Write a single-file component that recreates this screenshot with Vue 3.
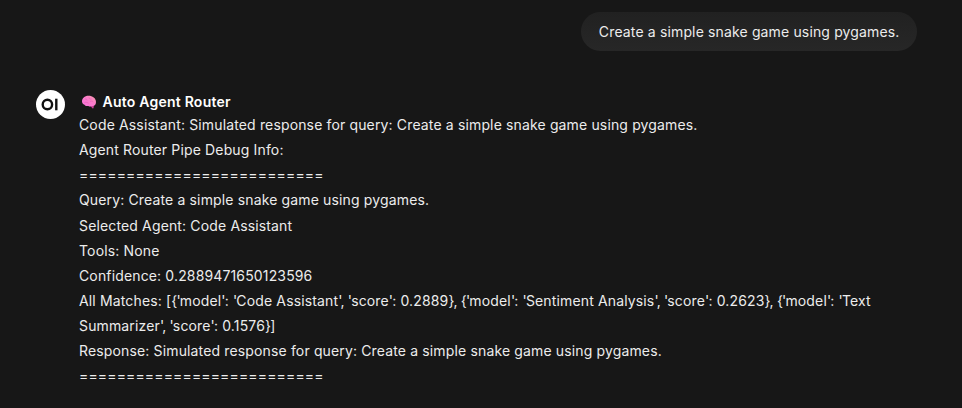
<script setup>
const lines = [
  'Code Assistant: Simulated response for query: Create a simple snake game using pygames.',
  'Agent Router Pipe Debug Info:',
  '==========================',
  'Query: Create a simple snake game using pygames.',
  'Selected Agent: Code Assistant',
  'Tools: None',
  'Confidence: 0.2889471650123596',
  "All Matches: [{'model': 'Code Assistant', 'score': 0.2889}, {'model': 'Sentiment Analysis', 'score': 0.2623}, {'model': 'Text Summarizer', 'score': 0.1576}]",
  'Response: Simulated response for query: Create a simple snake game using pygames.',
  '==========================',
].map((line) => line.split(/([',{}]+)/))
</script>

<template>
  <main class="chat">
    <div class="user-row">
      <div class="bubble">Create a simple snake game using pygames.</div>
    </div>
    <section class="reply">
      <svg class="avatar" viewBox="0 0 29 29">
        <circle cx="14.5" cy="14.5" r="14.5" fill="#fff" />
        <circle cx="11.4" cy="14.5" r="4.7" fill="none" stroke="#111" stroke-width="2.4" />
        <rect x="19.1" y="8.7" width="2.4" height="11.6" fill="#111" />
      </svg>
      <div class="content">
        <header class="name">
          <svg class="brain" viewBox="0 0 16 14">
            <defs>
              <linearGradient id="brain-fill" x1="0" y1="1" x2="1" y2="0">
                <stop offset="0" stop-color="#fb70dc" />
                <stop offset=".55" stop-color="#fa7cca" />
                <stop offset="1" stop-color="#f89aa9" />
              </linearGradient>
            </defs>
            <path d="M9 9.500l2 3.500c.5.7 1.500.7 1.600-.2l.4-3.800z" fill="#c93f98" />
            <path d="M1 6.500C1 3.500 3.500.8 7.500.8S15 3.300 15 7c0 2.800-1.500 4.200-4 4-1 .8-2.800.7-3.600-.1C5.500 11.300 4 10.800 3.500 9.700 2 9.500 1 8 1 6.500z" fill="url(#brain-fill)" />
            <path d="M4 4c1.200-.2 2 .5 2.200 1.400M8 2.500c0 1 1 1.800 2.500 1.500M3.500 7.500c1.500-.6 3 0 4 .8M9 6.500c1-.8 2.500-.5 3.300.6" fill="none" stroke="#dc58af" stroke-width=".55" />
          </svg>
          <span>Auto Agent Router</span>
        </header>
        <p v-for="(parts, i) in lines" :key="i" class="line"><template v-for="(part, j) in parts" :key="j"><span v-if="j % 2" class="punctuation">{{ part }}</span><template v-else>{{ part }}</template></template></p>
      </div>
    </section>
  </main>
</template>

<style>
body { background: #171717; }
</style>
<style scoped>
.chat { box-sizing: border-box; height: 408px; padding: 12px 45px 0 36px; background: #171717; color: #ececec; font: 14px/25.125px Inter, sans-serif; letter-spacing: .145px; overflow: hidden; }
.user-row { display: flex; justify-content: flex-end; }
.bubble { box-sizing: border-box; height: 39px; padding: 0 17.5px 0 18px; border-radius: 20px; background: linear-gradient(#212121, #272727); line-height: 40px; white-space: nowrap; }
.reply { display: flex; gap: 14px; padding-top: 39px; }
.avatar { flex: none; width: 29px; height: 29px; }
.content { width: 806px; }
.name { display: flex; align-items: center; gap: 5.5px; height: 22px; padding: 1px 0 0 2px; box-sizing: border-box; font-weight: 600; letter-spacing: .23px; color: #fff; }
.brain { width: 16px; height: 14px; }
.line { margin: 0; }
.punctuation { letter-spacing: -.83px; }
</style>
